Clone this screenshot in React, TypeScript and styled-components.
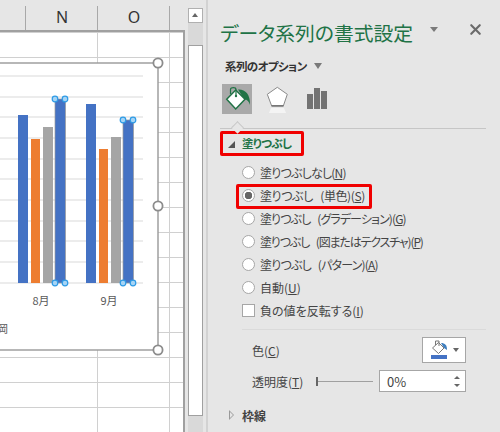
import React from 'react';
import styled, { createGlobalStyle } from 'styled-components';
import { X } from 'lucide-react';

const GlobalStyle = createGlobalStyle`
  html, body {
    margin: 0;
    padding: 0;
    background: #e6e6e6;
  }
  body {
    font-family: "Noto Sans CJK JP", "Noto Sans", sans-serif;
    font-feature-settings: "palt";
    color: #444;
  }
`;

const fillOptions = [
  { label: '塗りつぶしなし', key: 'N', tracking: -0.8 },
  { label: '塗りつぶし (単色)', key: 'S', tracking: -0.4, checked: true },
  { label: '塗りつぶし (グラデーション)', key: 'G', tracking: -0.9 },
  { label: '塗りつぶし (図またはテクスチャ)', key: 'P', tracking: -1.15 },
  { label: '塗りつぶし (パターン)', key: 'A', tracking: -0.8 },
  { label: '自動', key: 'U', tracking: 0 },
];

const gridLines = [76, 97, 117, 138, 159, 179, 200, 221, 241, 262, 283];

const bars = [
  { x: 18, w: 10, top: 115, color: '#4472c4' },
  { x: 31, w: 9, top: 139, color: '#ed7d31' },
  { x: 43, w: 10, top: 127, color: '#a5a5a5' },
  { x: 86, w: 10, top: 104, color: '#4472c4' },
  { x: 99, w: 9, top: 149, color: '#ed7d31' },
  { x: 111, w: 10, top: 137, color: '#a5a5a5' },
];

const selectedBars = [
  { x: 55, top: 99 },
  { x: 123, top: 120 },
];

function BarHandle({ cx, cy }: { cx: number; cy: number }) {
  return <circle cx={cx} cy={cy} r={2.8} fill="#a6d4f5" stroke="#2e9be6" strokeWidth={1.2} />;
}

function Chart() {
  return (
    <ChartSvg viewBox="0 0 170 370">
      <rect x={-4} y={63} width={162} height={287} fill="#fff" stroke="#999" strokeWidth={1.4} />
      {gridLines.map((y) => (
        <line key={y} x1={0} x2={143} y1={y} y2={y} stroke="#d9d9d9" strokeWidth={1} />
      ))}
      {bars.map((b) => (
        <rect key={b.x} x={b.x} y={b.top} width={b.w} height={283 - b.top} fill={b.color} />
      ))}
      {selectedBars.map((b) => (
        <g key={b.x}>
          <rect x={b.x} y={b.top} width={10.5} height={283 - b.top} fill="#4472c4" stroke="#9a9a9a" strokeWidth={0.7} />
          <BarHandle cx={b.x} cy={b.top} />
          <BarHandle cx={b.x + 10} cy={b.top} />
          <BarHandle cx={b.x} cy={283} />
          <BarHandle cx={b.x + 10} cy={283} />
        </g>
      ))}
      <AxisLabel x={41} y={305} textAnchor="middle">8月</AxisLabel>
      <AxisLabel x={109} y={305} textAnchor="middle">9月</AxisLabel>
      <AxisLabel x={-3} y={333}>岡</AxisLabel>
      {[63, 206, 350].map((cy) => (
        <circle key={cy} cx={158} cy={cy} r={4.6} fill="#fff" stroke="#8c8c8c" strokeWidth={1.8} />
      ))}
    </ChartSvg>
  );
}

function BucketIcon() {
  return (
    <svg width="30" height="30" viewBox="0 0 30 30">
      <path d="M16 5.5 C23 5 28.5 10 28 21 C27 17.5 25.5 15.5 22 15 Z" fill="#217346" />
      <path d="M4.7 15.3 L13.7 6 L23 15.3 L13.7 25 Z" fill="#fff" stroke="#217346" strokeWidth="1.5" />
      <path d="M8.5 10 V5.5 C8.5 3 14 3 14 5.5 V11.5" fill="none" stroke="#217346" strokeWidth="1.2" />
      <circle cx="14" cy="12" r="1.2" fill="#217346" />
    </svg>
  );
}

function PentagonIcon() {
  return (
    <svg width="30" height="30" viewBox="0 0 30 30">
      <path d="M9 24 H22 L24 29 H7 Z" fill="#f4f4f4" />
      <path d="M15.3 3.3 L25.3 10.3 L21.3 22 H9.7 L5.3 10.3 Z" fill="#fff" stroke="#8a8a8a" strokeWidth="1" />
      <rect x="9.5" y="21" width="12" height="1.6" fill="#777" />
    </svg>
  );
}

function ColumnsIcon() {
  return (
    <svg width="30" height="30" viewBox="0 0 30 30">
      <rect x="5" y="10" width="6" height="15" fill="#737373" />
      <rect x="12" y="4" width="6" height="21" fill="#737373" />
      <rect x="19" y="7" width="6" height="18" fill="#737373" />
    </svg>
  );
}

function SmallBucket() {
  return (
    <svg width="18" height="20" viewBox="0 0 18 20">
      <path d="M10 3 C14 3 16 5 16 10 L13 8 Z" fill="#3f7fbf" />
      <path d="M1.5 8 L7.5 2.5 L13 8 L7.5 13.5 Z" fill="#fff" stroke="#777" strokeWidth="1" />
      <path d="M4.5 5 V1 H8 V6" fill="none" stroke="#777" strokeWidth="1" />
      <rect x="0" y="15" width="16" height="4" fill="#4472c4" />
    </svg>
  );
}

export default function App() {
  return (
    <Page>
      <GlobalStyle />
      <SheetColumn>
        <ColumnHeader>
          <HeaderCell $width={26} />
          <HeaderCell $width={72}>N</HeaderCell>
          <HeaderCell $width={72}>O</HeaderCell>
        </ColumnHeader>
        <Cells>
          <Chart />
        </Cells>
      </SheetColumn>
      <ScrollBar>
        <ScrollUp />
        <ScrollGap />
        <ScrollThumb />
      </ScrollBar>
      <Panel>
        <TitleRow>
          <Title>データ系列の書式設定</Title>
          <TitleArrow />
          <CloseMark>
            <X size={17} strokeWidth={3} color="#6a6a6a" />
          </CloseMark>
        </TitleRow>
        <OptionRow>
          <OptionLabel>系列のオプション</OptionLabel>
          <OptionArrow />
        </OptionRow>
        <IconTabs>
          <IconTab $active><BucketIcon /></IconTab>
          <IconTab><PentagonIcon /></IconTab>
          <IconTab><ColumnsIcon /></IconTab>
        </IconTabs>
        <TabRule />
        <SectionHead>
          <OpenArrow />
          <SectionTitle>塗りつぶし</SectionTitle>
        </SectionHead>
        <Options>
          {fillOptions.map((o) => (
            <OptionItem key={o.key} $marked={o.checked}>
              <Radio $checked={o.checked} />
              <OptionText $tracking={o.tracking}>
                {o.label}(<u>{o.key}</u>)
              </OptionText>
            </OptionItem>
          ))}
          <OptionItem>
            <CheckBox />
            <OptionText $tracking={0}>
              負の値を反転する(<u>I</u>)
            </OptionText>
          </OptionItem>
        </Options>
        <ThinRule />
        <FieldRow>
          <FieldLabel>
            色(<u>C</u>)
          </FieldLabel>
          <ColorButton>
            <SmallBucket />
            <ColorArrow />
          </ColorButton>
        </FieldRow>
        <FieldRow $tight>
          <FieldLabel>
            透明度(<u>T</u>)
          </FieldLabel>
          <Slider />
          <Spinner>
            0%
            <SpinArrows>
              <SpinUp />
              <SpinDown />
            </SpinArrows>
          </Spinner>
        </FieldRow>
        <BorderHead>
          <ClosedArrow />
          <BorderTitle>枠線</BorderTitle>
        </BorderHead>
      </Panel>
    </Page>
  );
}

const Page = styled.div`
  display: flex;
  width: 500px;
  height: 432px;
  overflow: hidden;
  background: #e6e6e6;
`;

const SheetColumn = styled.div`
  display: flex;
  flex-direction: column;
  width: 185px;
  flex: none;
`;

const ColumnHeader = styled.div`
  display: flex;
  height: 24px;
  padding-top: 6px;
  flex: none;
`;

const HeaderCell = styled.div<{ $width: number }>`
  width: ${(p) => p.$width}px;
  border-right: 1px solid #a8a8a8;
  box-sizing: border-box;
  padding-left: 1px;
  text-align: center;
  font-family: "Noto Sans", sans-serif;
  font-size: 16px;
  line-height: 22px;
  color: #333;
`;

const Cells = styled.div`
  position: relative;
  flex: 1;
  border-top: 2px solid #a0a0a0;
  border-right: 2px solid #a0a0a0;
  background-color: #fff;
  background-image:
    repeating-linear-gradient(to bottom, transparent 0 24px, #d0d0d0 24px 25px),
    repeating-linear-gradient(to right, transparent 0 71px, #d0d0d0 71px 72px);
  background-position: 0 1px, 26px 0;
`;

const ChartSvg = styled.svg`
  position: absolute;
  left: 0;
  top: -32px;
  width: 170px;
  height: 370px;
  overflow: visible;
`;

const AxisLabel = styled.text`
  font-family: "Noto Sans CJK JP", sans-serif;
  font-size: 11px;
  fill: #595959;
`;

const ScrollBar = styled.div`
  display: flex;
  flex-direction: column;
  width: 15px;
  margin: 8px 3px 0 3px;
  flex: none;
  background: #d9d9d9;
`;

const ScrollUp = styled.div`
  position: relative;
  height: 15px;
  background: #fff;
  border: 1px solid #b0b0b0;
  box-sizing: border-box;

  &::after {
    content: '';
    position: absolute;
    left: 3px;
    top: 4px;
    border: 3.5px solid transparent;
    border-top: 0;
    border-bottom: 4px solid #666;
  }
`;

const ScrollGap = styled.div`
  height: 22px;
`;

const ScrollThumb = styled.div`
  height: 371px;
  background: #fff;
  border: 1px solid #a0a0a0;
  box-sizing: border-box;
`;

const Panel = styled.div`
  flex: 1;
  min-width: 0;
  border-left: 2px solid #d2d2d2;
  padding-left: 12px;
`;

const TitleRow = styled.div`
  display: flex;
  align-items: center;
  height: 40px;
  margin-top: 13px;
`;

const Title = styled.div`
  width: 210px;
  font-size: 19.8px;
  line-height: 38px;
  color: #217346;
  white-space: nowrap;
`;

const TitleArrow = styled.div`
  width: 0;
  height: 0;
  margin-top: -8px;
  border-left: 4.5px solid transparent;
  border-right: 4.5px solid transparent;
  border-top: 5px solid #7a7a7a;
`;

const CloseMark = styled.div`
  display: flex;
  margin: -8px 0 0 28.5px;
`;

const OptionRow = styled.div`
  display: flex;
  align-items: center;
  height: 20px;
  margin-top: 3px;
  padding-left: 5px;
`;

const OptionLabel = styled.div`
  width: 88.5px;
  font-size: 11.5px;
  font-weight: 700;
  letter-spacing: -0.6px;
  color: #333;
  white-space: nowrap;
`;

const OptionArrow = styled.div`
  width: 0;
  height: 0;
  border-left: 4.5px solid transparent;
  border-right: 4.5px solid transparent;
  border-top: 6px solid #7a7a7a;
`;

const IconTabs = styled.div`
  display: flex;
  gap: 10px;
  margin-top: 8px;
  padding-left: 2px;
`;

const IconTab = styled.div<{ $active?: boolean }>`
  width: 30px;
  height: 30px;
  background: ${(p) => (p.$active ? '#a9a9a9' : 'transparent')};
`;

const TabRule = styled.div`
  position: relative;
  width: 266px;
  height: 1px;
  margin-top: 14px;
  background: #c6c6c6;

  &::after {
    content: '';
    position: absolute;
    left: 13px;
    top: -5px;
    width: 8px;
    height: 8px;
    background: #e6e6e6;
    border-left: 1px solid #c6c6c6;
    border-top: 1px solid #c6c6c6;
    transform: rotate(45deg);
  }
`;

const SectionHead = styled.div`
  display: flex;
  align-items: center;
  box-sizing: border-box;
  width: 84px;
  height: 25px;
  margin-top: 2px;
  padding-left: 5px;
  border: 3px solid #f00000;
  border-radius: 2px;
`;

const OpenArrow = styled.div`
  width: 0;
  height: 0;
  margin-top: 1px;
  border-bottom: 7px solid #555;
  border-left: 7px solid transparent;
`;

const SectionTitle = styled.div`
  margin-left: 7px;
  padding-bottom: 1px;
  font-size: 11.5px;
  font-weight: 700;
  letter-spacing: -0.7px;
  color: #217346;
  white-space: nowrap;
`;

const Options = styled.div`
  display: flex;
  flex-direction: column;
  margin-top: 5px;
`;

const OptionItem = styled.div<{ $marked?: boolean }>`
  position: relative;
  display: flex;
  align-items: center;
  height: 23px;
  padding-left: 22px;
  gap: 5px;
  font-size: 12px;
  color: #444;
  white-space: nowrap;

  &::after {
    content: '';
    display: ${(p) => (p.$marked ? 'block' : 'none')};
    position: absolute;
    left: 16px;
    top: 0;
    width: 136px;
    height: 25px;
    box-sizing: border-box;
    border: 3px solid #f00000;
    border-radius: 2px;
  }
`;

const OptionText = styled.span<{ $tracking: number }>`
  letter-spacing: ${(p) => p.$tracking}px;
  word-spacing: 5px;
`;

const Radio = styled.div<{ $checked?: boolean }>`
  width: 11px;
  height: 11px;
  border-radius: 50%;
  flex: none;
  background: ${(p) => (p.$checked ? 'radial-gradient(circle, #666 0 3.5px, #fff 4px)' : '#fff')};
  border: 1px solid #a6a6a6;
`;

const CheckBox = styled.div`
  width: 11px;
  height: 11px;
  flex: none;
  background: #fff;
  border: 1px solid #a6a6a6;
`;

const ThinRule = styled.div`
  width: 244px;
  height: 1px;
  margin: 7px 0 0 22px;
  background: #dadada;
`;

const FieldRow = styled.div<{ $tight?: boolean }>`
  display: flex;
  align-items: center;
  box-sizing: border-box;
  height: ${(p) => (p.$tight ? '22px' : '26px')};
  margin-top: 7px;
  padding-left: 32px;
  width: 246px;
`;

const FieldLabel = styled.div`
  width: 64px;
  flex: none;
  font-size: 12px;
  color: #444;
  white-space: nowrap;
`;

const ColorButton = styled.div`
  display: flex;
  align-items: center;
  box-sizing: border-box;
  width: 44px;
  height: 26px;
  margin-left: auto;
  padding: 0 4px 0 8px;
  gap: 4px;
  background: #fff;
  border: 1px solid #a6a6a6;
`;

const ColorArrow = styled.div`
  width: 0;
  height: 0;
  border-left: 3.5px solid transparent;
  border-right: 3.5px solid transparent;
  border-top: 4px solid #666;
`;

const Slider = styled.div`
  position: relative;
  width: 57px;
  height: 1px;
  flex: none;
  background: #a0a0a0;

  &::before {
    content: '';
    position: absolute;
    left: 0;
    top: -4px;
    width: 2px;
    height: 9px;
    background: #666;
  }
`;

const Spinner = styled.div`
  display: flex;
  align-items: center;
  justify-content: space-between;
  box-sizing: border-box;
  width: 87px;
  height: 22px;
  margin-left: auto;
  padding: 0 5px 0 7px;
  font-size: 13px;
  background: #fff;
  border: 1px solid #a6a6a6;
`;

const SpinArrows = styled.div`
  display: flex;
  flex-direction: column;
  gap: 5px;
`;

const SpinUp = styled.div`
  width: 0;
  height: 0;
  border-left: 3px solid transparent;
  border-right: 3px solid transparent;
  border-bottom: 3px solid #666;
`;

const SpinDown = styled.div`
  width: 0;
  height: 0;
  border-left: 3px solid transparent;
  border-right: 3px solid transparent;
  border-top: 3px solid #666;
`;

const BorderHead = styled.div`
  display: flex;
  align-items: center;
  height: 20px;
  margin-top: 13px;
  padding-left: 9px;
`;

const ClosedArrow = styled.div`
  position: relative;
  width: 0;
  height: 0;
  border-top: 5px solid transparent;
  border-bottom: 5px solid transparent;
  border-left: 5px solid #999;

  &::after {
    content: '';
    position: absolute;
    left: -4.5px;
    top: -3.5px;
    border-top: 3.5px solid transparent;
    border-bottom: 3.5px solid transparent;
    border-left: 3.5px solid #e6e6e6;
  }
`;

const BorderTitle = styled.div`
  margin-left: 8px;
  font-size: 12px;
  font-weight: 700;
  color: #444;
`;
